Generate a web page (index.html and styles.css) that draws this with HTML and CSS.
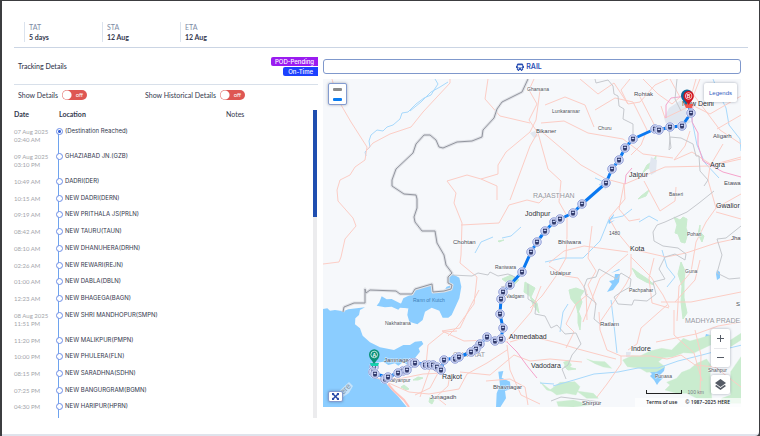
FILE: index.html
```
<!DOCTYPE html>
<html lang="en">
<head>
  <meta charset="UTF-8" />
  <meta name="viewport" content="width=device-width, initial-scale=1.0" />
  <title>Tracking Details</title>
  <link rel="stylesheet" href="styles.css">
</head>
<body>
  <div class="page">
    <header class="stats">
      <div class="stat"><span>TAT</span><strong>5 days</strong></div>
      <div class="stat"><span>STA</span><strong>12 Aug</strong></div>
      <div class="stat"><span>ETA</span><strong>12 Aug</strong></div>
    </header>

    <main class="content">
      <section class="tracking">
        <div class="tracking-head">
          <h2>Tracking Details</h2>
          <div class="badges">
            <span class="badge pending">POD-Pending</span>
            <span class="badge ontime">On-Time</span>
          </div>
        </div>

        <div class="switches">
          <div class="switch">
            <label for="details">Show Details</label>
            <span class="toggle"><input type="checkbox" id="details"><i>off</i></span>
          </div>
          <div class="switch">
            <label for="history">Show Historical Details</label>
            <span class="toggle"><input type="checkbox" id="history"><i>off</i></span>
          </div>
        </div>

        <div class="scroller">
          <table class="stops">
            <thead>
              <tr><th>Date</th><th>Location</th><th class="notes-head">Notes</th></tr>
            </thead>
            <tbody>
              <tr class="day last"><td>07 Aug 2025<br>02:40 AM</td><td>(Destination Reached)</td></tr>
              <tr class="day"><td>09 Aug 2025<br>03:10 PM</td><td>GHAZIABAD JN.(GZB)</td></tr>
              <tr><td>10:49 AM</td><td>DADRI(DER)</td></tr>
              <tr><td>10:15 AM</td><td>NEW DADRI(DERN)</td></tr>
              <tr><td>09:19 AM</td><td>NEW PRITHALA JS(PRLN)</td></tr>
              <tr><td>08:42 AM</td><td>NEW TAURU(TAUN)</td></tr>
              <tr><td>08:10 AM</td><td>NEW DHANUHERA(DRHN)</td></tr>
              <tr><td>02:26 AM</td><td>NEW REWARI(REJN)</td></tr>
              <tr><td>01:00 AM</td><td>NEW DABLA(DBLN)</td></tr>
              <tr><td>12:23 AM</td><td>NEW BHAGEGA(BAGN)</td></tr>
              <tr class="day"><td>08 Aug 2025<br>11:51 PM</td><td>NEW SHRI MANDHOPUR(SMPN)</td></tr>
              <tr><td>11:20 PM</td><td>NEW MALIKPUR(PMPN)</td></tr>
              <tr><td>10:00 PM</td><td>NEW PHULERA(FLN)</td></tr>
              <tr><td>08:15 PM</td><td>NEW SARADHNA(SDHN)</td></tr>
              <tr><td>07:25 PM</td><td>NEW BANGURGRAM(BGMN)</td></tr>
              <tr><td>04:30 PM</td><td>NEW HARIPUR(HPRN)</td></tr>
            </tbody>
          </table>
          <div class="scrollbar"></div>
        </div>
      </section>

      <section class="map-panel">
        <button class="rail" type="button">
          <svg viewBox="0 0 18 18" width="8" height="8"><path fill="#2b50b4" fill-rule="evenodd" d="M4 1h10l2 2v3h2v5h-2v5h-2v2h-3v-2H7v2H4v-2H2v-5H0V6h2V3zM4 5v5h10V5zM4 12v2h3v-2zM11 12v2h3v-2z"/></svg>
          RAIL
        </button>

        <div class="map">
          <svg class="canvas" viewBox="323 79 418 328" preserveAspectRatio="xMidYMid slice">
            <defs>
              <symbol id="stop" viewBox="-15 -15 30 30" overflow="visible">
                <circle r="15" fill="#fff" fill-opacity=".8"/>
                <circle r="13" fill="#c3cdf1" fill-opacity=".8" stroke="#6f80c8" stroke-width="2"/>
                <path fill="#262e62" fill-rule="evenodd" d="M-6-7h12v12h-2v3h-3v-2h-2v2h-3v-3h-2zM-4-4v4h8v-4zM-4 2v2h2v-2zM2 2v2h2v-2z"/>
              </symbol>
            </defs>

            <rect x="323" y="79" width="418" height="328" fill="#f6f8fb"/>

            <!-- sea and lakes -->
            <g fill="#8bcdff">
              <g transform="translate(320 265) scale(.33333)">
                <path d="M9 132L22 130 30 137 45 135 70 139 85 133 135 127 120 135 117 150 106 160 105 178 120 190 128 212 150 232 180 247 222 255 250 240 270 240 285 230 305 228 310 237 296 250 300 260 288 275 278 290 262 300 250 290 235 302 225 295 205 300 190 290 165 294 153 310 160 330 195 350 215 375 235 395 262 428H9z"/>
                <path d="M396 26L418 38 424 65 418 100 405 128 395 150 385 158 368 158 358 137 335 128 315 140 308 165 292 178 268 170 262 150 265 130 248 128 243 116 250 100 275 88 285 75 336 58 340 80 372 78 380 65 396 60 384 55 384 40z"/>
                <path d="M170 122L178 112 185 94 200 103 215 102 240 115 262 120 264 130 240 128 235 134 215 125 195 127zM528 428L530 385 540 360 535 320 550 318 545 338 570 350 572 372 555 378 558 400 540 428z"/>
              </g>
              <path d="M655 368l4 2 6-4-1 5-4 4 3 3-4 4-2 3-3-5-4-4 2-2-3-3zM615 274l5 0-1 8-6 8-6 2 5-8-3-3 5-1zM717 270l3 2 0 6-3 2-1-6zM706 334l4 1-2 7-4-1zM619 269l1 1-9 3zM609 224l6-4-5 2 4-7 0-1-6 7z"/>
            </g>

            <!-- forests -->
            <g fill="#caeccf" stroke="#caeccf" stroke-width="1" stroke-linejoin="round">
              <path d="M656 156l-3 5-6 4-5 9 5-5 8-4zM649 190l-8 6-3 3 8-3zM674 217l6 3 3-3 4 2-1 9 2 5-3 10-4-1-3-8-3-1 2-8zM700 225l-2 9 4 8 2-6-4-4zM681 262l4 9-1 12 0 15 3 15-4 6-2-17 1-16-4-12zM632 268l8 6 9 6 5 5-8-3-9-5z"/>
              <path d="M569 290l7-2 8 3-4 6 2 5-4 11-2-8-5-6zM578 310l3 8-1 12-2-7zM502 279l9-4 8 5-5 5-8-3zM525 282l10 6-4 9 6 6 2 10-6-8-3-9-6-4zM498 241l6-1-5 2z"/>
              <path d="M564 366l12 3-8 1zM401 387l5 3 3-1-5-4zM413 380l5-3 5 1-5 2zM430 397l4 3-2 4-3-2z"/>
              <g transform="translate(540 285) scale(.33333)">
                <path d="M248 225L275 212 300 213 330 198 365 190 395 195 410 180 430 160 450 168 480 160 512 150 512 180 480 195 460 205 430 203 400 215 370 218 355 230 375 245 350 260 320 262 300 250 262 245zM140 222L160 228 195 230 215 250 190 246 165 236zM375 315L390 300 380 292 410 280 425 262 450 252 470 235 500 222 512 240 510 290 516 345 470 340 440 325 410 325zM572 260L603 215 603 355 540 355 545 340 572 330zM572 165L603 145 603 165 572 185z"/>
                <path d="M60 292L105 290 120 305 108 330 80 325 50 330 30 315zM0 290L25 310 40 320 20 315zM110 318L160 325 175 340 140 340zM50 350L100 345 150 360 100 366 55 364zM70 232L85 225 95 240 82 255z"/>
              </g>
            </g>
            <path fill="#e1e7f0" d="M669 108l12-8 6 5-1 11 5 6-10 5-6-3-8 3-3-9zM651 157l6 3-1 12-5 3-2-7zM530 133l5-2 3 5-4 2zM603 184l5 2-3 4zM626 352l5 0-1 5-4 0z"/>

            <!-- rivers -->
            <g fill="none" stroke="#a8d9fb" stroke-width="1">
              <path d="M435 79l3 5-4 6-3 5-7 3-8 6-8 8-6 1-2 6-7 6-6 2-4 4-6-1-6 5-2 6 1 6-5 5 1 4M448 82l-8 5-9 5-10 10-11 9"/>
              <path d="M713 79l5 13 8 16 3 17 11 14 1 12M688 100l5 25 4 20 8 18 14 15M545 262l18-4 20 0 17-17 9-22 14-3 9-7M662 250l5 17 8 10-8 10M639 222l10-6 9 5M553 386l21-6 20-6 24-2 20-4 20 0 20-7 24-6 15-4 25-6M475 253l6-11 12-5M595 178l9 4-5 3M521 227l-10 9-9 2M560 332l3-20 5-8M554 384l-14-1M611 300l3 25 3 28"/>
            </g>

            <!-- roads -->
            <g fill="none" stroke="#fccdc5" stroke-width="1">
              <path d="M332 79l5 19 14 24 16 25-2 13-10 7-5 8-10 5-3 10 1 11 15 17 3 8-11 13-4 18-2 5-16 2M450 79l0 4-27 29-12 15-21 7-17 9-7 8M447 181l20-6 14 4 16 7 0 14M481 179l17-5 0-9 8-13 24-20 6-12 4-30M447 181l9 12-2 10 8 20-1 32-1 8 17 14-3 27-16 22-10 10M461 225l38-2 10-18 18-5 12 3 10-10M510 200l20-54 8-14M534 79l-5 11 8 14-8 16 9 13 10 36 13 12-2 21 8 14 0 20-1 22-10 18-14 20-12 12"/>
              <path d="M541 123l23-2 24 12 35 6 20 15 30 4M541 131l40 34 25 14 19 5 40-17 45-1 31-7M545 105l20-8 20 8 9 22M580 79l18 15 16-11 14 21 12-2 15-17 13-6M595 110l20-12 18 4 14 28-6 15-10 10M628 104l-7-14 9-11M643 79l15 15 14 10 8-7-10-18M657 130l-18-35M700 79l-10 25 20 10 31-18M690 90l30 40 21 14M696 79l-8 28-23 11-4-12M690 131l-5 15-11 14 18-8 20 13 29-8M723 144l-13 22-2 14 8 28-10 14-10 20-5 30-12 14-2 35M716 208l25-14M716 212l25 7M624 184l1 15-16 19 8 14 14 17 35 8 20-4 30-10 42-9M624 184l-5 25 10 12 11-2M644 181l16 30 15-10 1-14M549 263l15-12 20-5 44 6M549 266l16 10 13 2 8 12 1 30M628 254l-28 24-17 44M631 254l0 20-5 10-26 38M654 258l-5 20 3 25 17 5M631 257l20 20 12 18 6 12"/>
              <path d="M488 79l-3 20 15 17 30 7M510 342l20-6 28 7 20 6 30 8 8 2M667 305l-26 23-4 16-9 6M599 312l1 18 7 20 14 6 0 8-14 20-10 13M621 356l30 0 16 3 14-4 14 10 20 2 26 20M661 302l30 0 50-10M700 260l-5 20-20 22M656 342l40-8 22-8 23-4M674 310l0 25 20 18 8 28M695 330l6 25-1 40M507 340l24-28 10-26M566 348l8-16-8-8 10-20 12-10M508 342l-18-2-26 1-22-10 18-3 10-21 9-17M507 345l3 25 11 25 19 9M507 350l-20 13-20 11-8 15-30 5-20-2-34-15M450 374l-2 12-12 11 10 8M460 372l30 3 24-20 16 6 20-2 32 3M428 345l16-13 13-1M428 345l-2 20 12 8-8 15-15 7M376 376l22 3 25-5 20-1M486 381l24-2 15 8 3 18M430 369l-10 28M741 115l-24 14M596 305l-8-20 8-14-8-13 4-32"/>
            </g>
            <path fill="none" stroke="#ffc3bd" stroke-width="2" d="M388 384l6 7 10 9 5 7"/>
            <path fill="none" stroke="#f5a3cb" stroke-width="1" d="M666 118l0-13 5-7 16-2 6 8-1 18 6 11 0 12 5 16 20 11 18 5M632 168l-6 7-1 9M507 342l10 10 11 15 9 11"/>

            <!-- borders -->
            <g fill="none" stroke="#c6c9ce" stroke-width="1">
              <path d="M595 79l1 4 12-3 5 6 1 8 4 2 1 10 5 3-1 10 10 5 0 11 5 6M677 79l-2 20 6 12M669 130l2 18-2 2 1-13 11 1 12 6 3 12 3 0 1 15 8 9-4 6M714 191l-15 12-12 9-22 10-8 3-4 7 1 9 9 5 15 2 8 6-1 6-10-6-10 3-6 12 6 10-12 3 3 12-9 7-13-1-2 5-14-1-4-7 7-5 9-5 1-8-10-6-4 6-18-10-3 8-9 2-3 8 2 8 10 8-2 16 6 5M452 275l20 1 6-3 10 2 2-3 8 4 10-2 7 3-5 8-9 2M528 284l0 15 8 5-1 10 10 2 6 12 6-3 8 9 11-1 5 11-9 11-4 10-6 4 4 10M741 226l-15 12-9 1 5 16-5 18 12 6 11-1M551 401l10-4 24 3 15 2"/>
            </g>
            <g fill="none" stroke-linejoin="round">
              <path stroke="#e0e2e7" stroke-width="3" d="M528 79L522 92 502 102 497 109 494 118 483 130 482 137 472 141 457 142 443 148 439 147 436 140 430 135 424 135 416 144 413 153 396 169 392 180 392 186 404 194 416 195 417 199 417 208 414 217 415 222 422 231 435 231 437 243 444 255 446 265 452 273 448 277 448 283 452 285 451 289 444 291 433 292 432 284 415 289 412 294 400 294 396 291 370 290 366 293 365 289 365 303 354 303 344 307 343 312"/>
              <path stroke="#92959e" d="M528 79L522 92 502 102 497 109 494 118 483 130 482 137 472 141 457 142 443 148 439 147 436 140 430 135 424 135 416 144 413 153 396 169 392 180 392 186 404 194 416 195 417 199 417 208 414 217 415 222 422 231 435 231 437 243 444 255 446 265 452 273 448 277 448 283 452 285 451 289 444 291 433 292 432 284 415 289 412 294 400 294 396 291 370 290 366 293 365 289 365 303 354 303 344 307 343 312"/>
            </g>

            <!-- place names -->
            <g class="town">
              <text x="527" y="91">Gharsana</text><text x="552" y="113">Lunkaransar</text>
              <text x="598" y="130">Churu</text><text x="495" y="269">Raniwara</text>
              <text x="506" y="298">Vadgam</text><text x="669" y="196">Baseri</text>
              <text x="629" y="292">Pachpahar</text><text x="687" y="236">Pohari</text>
              <text x="685" y="273">Guna</text><text x="385" y="325">Nakhatrana</text>
              <text x="388" y="382">Kalyanpur</text><text x="655" y="378">Punasa</text>
              <text x="708" y="372">Shahpur</text><text x="609" y="235">1480</text>
            </g>
            <g class="city">
              <text x="634" y="96">Rohtak</text><text x="536" y="133">Bikaner</text>
              <text x="713" y="138">Aligarh</text><text x="724" y="185">Etawa</text>
              <text x="453" y="244">Chohtan</text><text x="558" y="244">Bhilwara</text>
              <text x="550" y="275">Udaipur</text><text x="731" y="240">Jha</text>
              <text x="600" y="326">Ratlam</text><text x="384" y="362">Jamnagar</text>
              <text x="493" y="389">Bhavnagar</text><text x="430" y="399">Junagadh</text>
              <text x="582" y="405">Shirpur</text><text x="736" y="306">S</text>
            </g>
            <g class="metro">
              <text x="682" y="106">New Delhi</text><text x="710" y="167">Agra</text>
              <text x="629" y="177">Jaipur</text><text x="716" y="208">Gwalior</text>
              <text x="525" y="216">Jodhpur</text><text x="630" y="251">Kota</text>
              <text x="509" y="339">Ahmedabad</text><text x="531" y="368">Vadodara</text>
              <text x="442" y="379">Rajkot</text><text x="631" y="351">Indore</text>
            </g>
            <g class="state">
              <text x="533" y="198">RAJASTHAN</text><text x="685" y="323">MADHYA PRADE</text>
              <text x="453" y="357">GUJARAT</text>
            </g>
            <text class="water" x="413" y="302">Rann of Kutch</text>
            <path d="M335 395l14-13 4 4-4 7-9 6z" fill="#d4e9f9" fill-opacity=".8"/>
            <text class="here" transform="translate(340 398) rotate(-45)">here</text>

            <!-- route -->
            <path fill="none" stroke="#0a78f0" stroke-width="3" stroke-linejoin="round" d="M688 104L691 113 682 126 670 127 659 130 655 129 633 139 625 148 619 160 612 169 606 183 582 204 573 213 560 219 554 222 545 231 537 242 531 252 522 272 510 285 503 292 501 299 500 314 503 328 501 339 495 341 487 337 480 344 476 349 471 352 459 357 444 360 441 370 433 365 415 363 407 370 398 373 388 377 375 374 374 366"/>
            <g class="pins">
              <use href="#stop" x="686" y="108" width="10" height="10"/>
              <use href="#stop" x="677" y="121" width="10" height="10"/>
              <use href="#stop" x="665" y="122" width="10" height="10"/>
              <use href="#stop" x="650" y="124" width="10" height="10"/>
              <use href="#stop" x="654" y="125" width="10" height="10"/>
              <use href="#stop" x="628" y="134" width="10" height="10"/>
              <use href="#stop" x="620" y="143" width="10" height="10"/>
              <use href="#stop" x="614" y="155" width="10" height="10"/>
              <use href="#stop" x="607" y="164" width="10" height="10"/>
              <use href="#stop" x="601" y="178" width="10" height="10"/>
              <use href="#stop" x="577" y="199" width="10" height="10"/>
              <use href="#stop" x="568" y="208" width="10" height="10"/>
              <use href="#stop" x="549" y="217" width="10" height="10"/>
              <use href="#stop" x="555" y="214" width="10" height="10"/>
              <use href="#stop" x="540" y="226" width="10" height="10"/>
              <use href="#stop" x="532" y="237" width="10" height="10"/>
              <use href="#stop" x="526" y="247" width="10" height="10"/>
              <use href="#stop" x="517" y="267" width="10" height="10"/>
              <use href="#stop" x="505" y="280" width="10" height="10"/>
              <use href="#stop" x="498" y="287" width="10" height="10"/>
              <use href="#stop" x="496" y="294" width="10" height="10"/>
              <use href="#stop" x="495" y="309" width="10" height="10"/>
              <use href="#stop" x="498" y="323" width="10" height="10"/>
              <use href="#stop" x="490" y="336" width="10" height="10"/>
              <use href="#stop" x="496" y="334" width="10" height="10"/>
              <use href="#stop" x="482" y="332" width="10" height="10"/>
              <use href="#stop" x="475" y="339" width="10" height="10"/>
              <use href="#stop" x="471" y="344" width="10" height="10"/>
              <use href="#stop" x="466" y="347" width="10" height="10"/>
              <use href="#stop" x="450" y="354" width="10" height="10"/>
              <use href="#stop" x="454" y="352" width="10" height="10"/>
              <use href="#stop" x="439" y="355" width="10" height="10"/>
              <use href="#stop" x="420" y="360" width="10" height="10"/>
              <use href="#stop" x="424" y="360" width="10" height="10"/>
              <use href="#stop" x="428" y="360" width="10" height="10"/>
              <use href="#stop" x="432" y="362" width="10" height="10"/>
              <use href="#stop" x="436" y="365" width="10" height="10"/>
              <use href="#stop" x="407" y="358" width="10" height="10"/>
              <use href="#stop" x="410" y="358" width="10" height="10"/>
              <use href="#stop" x="398" y="366" width="10" height="10"/>
              <use href="#stop" x="402" y="365" width="10" height="10"/>
              <use href="#stop" x="393" y="368" width="10" height="10"/>
              <use href="#stop" x="380" y="374" width="10" height="10"/>
              <use href="#stop" x="383" y="372" width="10" height="10"/>
              <use href="#stop" x="369" y="362" width="10" height="10"/>
              <use href="#stop" x="368" y="367" width="10" height="10"/>
              <use href="#stop" x="370" y="369" width="10" height="10"/>
            </g>

            <!-- origin and destination -->
            <path fill="#17d0b0" d="M370 363h9l-1 3h-7z"/>
            <path fill="#0a9076" d="M374 364c-1-3-5-5-5-9.500a5 5 0 0 1 10.500 0c0 4.500-4 6.500-5.500 9.500z"/>
            <circle cx="374.200" cy="354.500" r="3.300" fill="none" stroke="#fff" stroke-width=".7"/>
            <text class="pin-letter" x="374.200" y="356.500">A</text>
            <path fill="#f0584f" d="M684 104h9l-1 4h-6z"/>
            <path fill="#0b6799" d="M686 105c-1-3-5-5-5-9.500a6 6 0 0 1 12 0c0 4-5 6-7 9.500z"/>
            <path fill="#d0101c" d="M688.500 105c-1-3-5-5-5-9a5 5 0 0 1 10.300 0c0 4-4 6-5.300 9z"/>
            <circle cx="688.600" cy="96" r="3.300" fill="none" stroke="#fff" stroke-width=".7"/>
            <text class="pin-letter" x="688.600" y="98">B</text>
          </svg>

          <button class="ctl view-switch" type="button" aria-label="Change line view"><i></i><i></i></button>
          <button class="ctl legends" type="button">Legends</button>
          <button class="ctl expand" type="button" aria-label="Full screen">
            <svg viewBox="0 0 14 14" width="7" height="7"><path fill="#2346a5" d="M0 0h5L3.500 1.500 7 5l3.500-3.500L9 0h5v5l-1.500-1.500L9 7l3.500 3.500L14 9v5H9l1.500-1.500L7 9l-3.500 3.500L5 14H0V9l1.500 1.500L5 7 1.500 3.500 0 5z"/></svg>
          </button>
          <div class="ctl zoom">
            <button type="button" aria-label="Zoom in"><svg viewBox="0 0 7 7" width="7" height="7"><path stroke="#555b66" d="M0 3.500h7M3.500 0v7"/></svg></button>
            <button type="button" aria-label="Zoom out"><svg viewBox="0 0 7 7" width="7" height="7"><path stroke="#555b66" d="M0 3.500h7"/></svg></button>
          </div>
          <button class="ctl layers" type="button" aria-label="Map layers">
            <svg viewBox="0 0 22 22" width="11" height="11"><path fill="#555b66" d="M11 0l11 8-11 8L0 8zM3 12l8 6 8-6 3 2-11 8L0 14z"/></svg>
          </button>
          <div class="scale"><i></i><span>100 km</span></div>
          <div class="credit"><a href="#">Terms of use</a><span>© 1987–2025 HERE</span></div>
        </div>
      </section>
    </main>
  </div>
</body>
</html>
```
FILE: styles.css
```
* {
  box-sizing: border-box;
}

body {
  margin: 0;
  min-height: 100vh;
  display: flex;
  background-color: #3c3d40;
  color: #33374d;
  font-family: Lato, "Open Sans", sans-serif;
  font-size: 7px;
  line-height: 8px;
}

button {
  font: inherit;
  padding: 0;
  cursor: pointer;
}

.page {
  flex: 1;
  margin: 1px 1px 0 2px;
  padding: 21px 11px 0 12px;
  background-color: #fff;
  border-bottom: 2px solid #dfe3ec;
  border-bottom-right-radius: 4px;
}

/* top figures */
.stats {
  display: flex;
  padding: 0 10px 5px;
  border-bottom: 1px solid #cbd5e4;
}

.stat {
  display: flex;
  flex-direction: column;
  width: 78px;
  padding-left: 4px;
  border-left: 1px solid #dbe3ee;
  line-height: 10px;
}

.stat span {
  color: #7c8aa5;
}

.content {
  display: grid;
  grid-template-columns: 8fr 11fr;
  gap: 5px;
  padding: 9px 7px 14px 0;
}

/* left side */
.tracking {
  display: flex;
  flex-direction: column;
}

.tracking-head {
  display: flex;
  justify-content: space-between;
  padding: 0 0 8px 4px;
  border-bottom: 1px solid #d8e0ea;
}

.tracking-head h2 {
  margin: 5px 0;
  font-size: 7px;
  font-weight: 500;
}

.badges {
  display: flex;
  flex-direction: column;
  align-items: flex-end;
  gap: 1px;
}

.badge {
  padding: 0 4px;
  border-radius: 2px 0 0 2px;
  color: #fff;
  font-family: Inter, sans-serif;
  font-size: 6px;
  font-weight: 500;
  line-height: 9px;
}

.pending {
  background-color: #9a1cf0;
}

.ontime {
  padding: 0 5px;
  background-color: #1c41ff;
}

.switches {
  display: flex;
  gap: 58px;
  padding: 5px 4px;
}

.switch {
  display: flex;
  align-items: center;
  gap: 4px;
}

.toggle {
  position: relative;
  display: flex;
}

.toggle input {
  appearance: none;
  width: 25px;
  height: 10px;
  margin: 0;
  border-radius: 5px;
  background: radial-gradient(circle at 5px 5px, #fff 4px, #de5753 5px);
}

.toggle i {
  position: absolute;
  right: 4px;
  top: 1px;
  color: #fff;
  font-size: 6px;
  font-style: normal;
  pointer-events: none;
}

.scroller {
  flex: 1;
  display: flex;
  justify-content: space-between;
  padding-top: 5px;
}

.stops {
  display: block;
  flex: 1;
}

.stops thead {
  display: block;
  height: 16px;
}

.stops tbody {
  display: flex;
  flex-direction: column;
  height: 292px;
}

.stops tr {
  display: grid;
  grid-template-columns: 45px 167px 1fr;
}

.stops th {
  padding: 0;
  text-align: left;
  font-weight: 700;
  line-height: 8px;
}

.stops .notes-head {
  font-weight: 400;
}

.stops tbody tr {
  position: relative;
  flex: 2;
}

.stops tbody tr.day {
  flex: 3;
}

.stops td {
  padding: 1px 0 0 6px;
  font-family: Inter, sans-serif;
  font-size: 6px;
}

.stops td:first-child {
  padding: 2px 0 0;
  color: #a3a5aa;
  font-family: Lato, sans-serif;
}

.stops tbody tr::before {
  content: "";
  position: absolute;
  left: 44px;
  top: 5px;
  bottom: -5px;
  border-left: 1px solid #6ea3ee;
}

.stops tbody tr:last-child::before {
  bottom: 0;
}

.stops tbody tr::after {
  content: "";
  position: absolute;
  left: 42px;
  top: 2px;
  width: 5px;
  height: 5px;
  border: 1px solid #6b8de6;
  border-radius: 50%;
  background-color: #fff;
}

.stops tbody tr.last::after {
  background: radial-gradient(circle, #3560d8 1px, #fff 2px);
}

.scrollbar {
  width: 4px;
  margin-right: 1px;
  background: linear-gradient(#1f4eb0, #1f4eb0) top / 100% 107px no-repeat #ececee;
}

/* right side */
.map-panel {
  display: flex;
  flex-direction: column;
  gap: 5px;
  padding-top: 2px;
}

.rail {
  display: flex;
  align-items: center;
  justify-content: center;
  gap: 2px;
  height: 15px;
  padding-right: 6px;
  border: 1px solid #7f98cc;
  border-radius: 3px;
  background-color: #fff;
  color: #2b50b4;
  font-family: Inter, sans-serif;
  font-weight: 600;
}

.map {
  position: relative;
  height: 328px;
  overflow: hidden;
  font-family: "Liberation Sans", Arial, sans-serif;
}

.canvas {
  display: block;
  width: 100%;
  height: 100%;
}

.canvas text {
  paint-order: stroke;
  stroke: #fff;
  stroke-opacity: 0.7;
  stroke-width: 1px;
}

.town {
  font-size: 5px;
  fill: #4c505a;
}

.city {
  font-size: 6px;
  fill: #454954;
}

.metro {
  font-size: 7px;
  fill: #2b2e36;
}

.state {
  font-size: 7px;
  fill: #94979f;
}

.canvas .water {
  font-size: 5px;
  fill: #3d7fb8;
  stroke: none;
}

.canvas .here {
  font-size: 8px;
  fill: #8494a5;
  stroke: none;
}

.canvas .pin-letter {
  font-size: 5px;
  font-weight: bold;
  text-anchor: middle;
  fill: #fff;
  stroke: none;
}

/* controls lying over the map */
.ctl {
  position: absolute;
  display: flex;
  align-items: center;
  justify-content: center;
  border: 0;
  border-radius: 2px;
  background-color: #fff;
  box-shadow: 0 0 3px rgba(40, 50, 80, 0.4);
}

.view-switch {
  left: 5px;
  top: 4px;
  width: 19px;
  height: 22px;
  flex-direction: column;
  gap: 7px;
  border: 1px solid #839bd0;
}

.view-switch i {
  width: 9px;
  height: 3px;
  border-radius: 1px;
  background-color: #8b8b8b;
}

.view-switch i + i {
  background-color: #0b7cf0;
}

.legends {
  right: 4px;
  top: 4px;
  width: 33px;
  height: 19px;
  color: #3560c0;
  font-size: 6px;
}

.expand {
  left: 5px;
  bottom: 5px;
  width: 15px;
  height: 11px;
  border: 1px solid #839bd0;
}

.zoom {
  right: 11px;
  bottom: 40px;
  width: 19px;
  height: 38px;
  flex-direction: column;
}

.zoom button {
  display: flex;
  flex: 1;
  width: 13px;
  align-items: center;
  justify-content: center;
  border: 0;
  background: none;
}

.zoom button + button {
  border-top: 1px solid #e8e9ec;
}

.layers {
  right: 11px;
  bottom: 13px;
  width: 19px;
  height: 19px;
}

.scale {
  position: absolute;
  right: 37px;
  bottom: 11px;
  display: flex;
  align-items: center;
  gap: 6px;
  color: #777b84;
  font-size: 5px;
}

.scale i {
  width: 36px;
  height: 4px;
  border: 1px solid #222;
  border-top: 0;
}

.credit {
  position: absolute;
  right: 0;
  bottom: 0;
  display: flex;
  gap: 8px;
  padding: 0 11px;
  background-color: rgba(255, 255, 255, 0.7);
  color: #22252b;
  font-family: "Open Sans", sans-serif;
  font-size: 5px;
  font-weight: 600;
  line-height: 9px;
}

.credit a {
  color: inherit;
  text-decoration: none;
}
```
